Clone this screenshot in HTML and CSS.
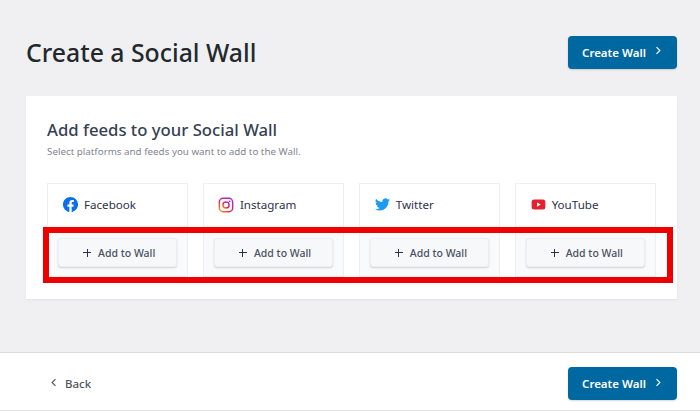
FILE: index.html
```html
<!DOCTYPE html>
<html lang="en">
<head>
    <meta charset="UTF-8">
    <meta name="viewport" content="width=device-width, initial-scale=1.0">
    <title>Create a Social Wall</title>
    <link rel="stylesheet" href="styles.css">
</head>
<body>
    <main class="content">
        <header class="page-header">
            <h1>Create a Social Wall</h1>
            <button class="btn-primary">Create Wall
                <svg class="chevron" viewBox="0 0 8 12"><path d="M2 1.5 6.5 6 2 10.5"/></svg>
            </button>
        </header>
        <section class="panel">
            <h2>Add feeds to your Social Wall</h2>
            <p class="hint">Select platforms and feeds you want to add to the Wall.</p>
            <div class="feeds">
                <div class="feed">
                    <div class="feed-name">
                        <svg class="icon" viewBox="0 0 24 24"><path fill="#0a6fe8" d="M24 12.07C24 5.4 18.63 0 12 0S0 5.4 0 12.07c0 6.03 4.39 11.02 10.13 11.93v-8.44H7.08v-3.49h3.05V9.41c0-3.02 1.79-4.69 4.53-4.69 1.31 0 2.69.24 2.69.24v2.97h-1.52c-1.49 0-1.96.93-1.96 1.89v2.25h3.33l-.53 3.49h-2.8V24C19.61 23.09 24 18.1 24 12.07z"/></svg>
                        Facebook
                    </div>
                    <div class="feed-action">
                        <button class="btn-add"><span class="plus"></span>Add to Wall</button>
                    </div>
                </div>
                <div class="feed">
                    <div class="feed-name">
                        <svg class="icon icon-ig" viewBox="0 0 24 24">
                            <defs>
                                <linearGradient id="ig" x1="0" y1="1" x2="1" y2="0">
                                    <stop offset="0" stop-color="#f9a01b"/>
                                    <stop offset=".4" stop-color="#e4264f"/>
                                    <stop offset=".75" stop-color="#c426a6"/>
                                    <stop offset="1" stop-color="#8a3ad0"/>
                                </linearGradient>
                            </defs>
                            <rect x="2" y="2" width="20" height="20" rx="5.5" fill="none" stroke="url(#ig)" stroke-width="2.2"/>
                            <circle cx="12" cy="12" r="4.6" fill="none" stroke="url(#ig)" stroke-width="2.2"/>
                            <circle cx="17.6" cy="6.4" r="1.3" fill="#b52bb0"/>
                        </svg>
                        Instagram
                    </div>
                    <div class="feed-action">
                        <button class="btn-add"><span class="plus"></span>Add to Wall</button>
                    </div>
                </div>
                <div class="feed">
                    <div class="feed-name">
                        <svg class="icon" viewBox="0 0 24 24"><path fill="#1d9bf0" d="M24 4.56a9.8 9.8 0 0 1-2.83.78 4.94 4.94 0 0 0 2.17-2.72 9.9 9.9 0 0 1-3.13 1.19 4.93 4.93 0 0 0-8.4 4.49A14 14 0 0 1 1.67 3.15a4.93 4.93 0 0 0 1.53 6.57 4.9 4.9 0 0 1-2.23-.61v.06a4.93 4.93 0 0 0 3.95 4.83 4.9 4.9 0 0 1-2.22.08 4.93 4.93 0 0 0 4.6 3.42A9.9 9.9 0 0 1 0 19.54 14 14 0 0 0 7.55 21.75c9.06 0 14-7.5 14-14l-.02-.64A10 10 0 0 0 24 4.56z"/></svg>
                        Twitter
                    </div>
                    <div class="feed-action">
                        <button class="btn-add"><span class="plus"></span>Add to Wall</button>
                    </div>
                </div>
                <div class="feed">
                    <div class="feed-name">
                        <svg class="icon" viewBox="0 0 24 24"><rect x="1" y="4" width="22" height="16" rx="4" fill="#e3222f"/><path fill="#fff" d="M9.8 8.6v6.8l5.8-3.4z"/></svg>
                        YouTube
                    </div>
                    <div class="feed-action">
                        <button class="btn-add"><span class="plus"></span>Add to Wall</button>
                    </div>
                </div>
            </div>
            <div class="highlight"></div>
        </section>
    </main>
    <footer class="page-footer">
        <a href="#" class="back-link">
            <svg class="chevron" viewBox="0 0 8 12"><path d="M6 1.5 1.5 6 6 10.5"/></svg>
            Back
        </a>
        <button class="btn-primary">Create Wall
            <svg class="chevron" viewBox="0 0 8 12"><path d="M2 1.5 6.5 6 2 10.5"/></svg>
        </button>
    </footer>
</body>
</html>
```
FILE: styles.css
```css
* {
    box-sizing: border-box;
}
html, body {
    height: 100%;
}
body {
    margin: 0;
    display: flex;
    flex-direction: column;
    height: 411px;
    overflow: hidden;
    background-color: #f0f0f2;
    font-family: "Noto Sans", "Open Sans", sans-serif;
    color: #2c324c;
}
.content {
    flex: 1;
    padding: 36px 23px 0 26px;
}
.page-header {
    display: flex;
    justify-content: space-between;
    align-items: center;
    height: 32px;
    margin-bottom: 28px;
}
h1 {
    margin: 0;
    font-size: 24.8px;
    font-weight: 500;
    color: #23282d;
}
button {
    font-family: inherit;
    cursor: pointer;
}
.btn-primary {
    display: flex;
    align-items: center;
    justify-content: center;
    gap: 9px;
    width: 109px;
    height: 33px;
    padding: 0 2px 0 0;
    border: none;
    border-radius: 4px;
    background-color: #0068a0;
    box-shadow: 0 1px 2px rgba(0, 0, 0, 0.15);
    color: #fff;
    font-size: 11.5px;
    font-weight: 600;
}
.chevron {
    width: 6px;
    height: 9px;
    margin-top: -3px;
    fill: none;
    stroke: currentColor;
    stroke-width: 1.5;
}
.panel {
    position: relative;
    height: 203px;
    padding: 23px 21px 0;
    background-color: #fff;
    box-shadow: 0 1px 2px rgba(0, 0, 0, 0.06);
}
h2 {
    margin: 0;
    font-size: 16.7px;
    line-height: 22px;
    font-weight: 500;
    color: #364152;
}
.hint {
    margin: 4px 0 0;
    font-size: 9.8px;
    line-height: 14px;
    color: #82858f;
}
.feeds {
    display: grid;
    grid-template-columns: repeat(4, 1fr);
    gap: 14.5px;
    margin-top: 24px;
}
.feed {
    height: 94px;
    border: 1px solid #eeeff1;
    display: flex;
    flex-direction: column;
}
.feed-name {
    display: flex;
    align-items: center;
    gap: 6px;
    height: 41px;
    padding: 0 0 0 15px;
    font-size: 11.6px;
    color: #2c324c;
}
.icon {
    width: 15px;
    height: 15px;
    flex: none;
}
.icon-ig {
    width: 16px;
    height: 16px;
    margin-left: -1px;
}
.feed-action {
    flex: 1;
    padding: 13px 10px 0;
    background-color: #f9fafb;
}
.btn-add {
    display: flex;
    align-items: center;
    justify-content: center;
    gap: 7px;
    width: 100%;
    height: 29px;
    padding: 0 0 0 3px;
    border: 1px solid #eceef1;
    border-radius: 3px;
    background-color: #f7f8fa;
    box-shadow: 0 1px 2px rgba(0, 0, 0, 0.16);
    color: #4a5162;
    font-size: 10.5px;
    font-weight: 500;
}
.plus {
    width: 8px;
    height: 8px;
    background:
        linear-gradient(#2c324c, #2c324c) center / 8px 1.2px no-repeat,
        linear-gradient(#2c324c, #2c324c) center / 1.2px 8px no-repeat;
}
/* red marker drawn on top of the screenshot */
.highlight {
    position: absolute;
    left: 17px;
    top: 131px;
    width: 630px;
    height: 56px;
    border: 6px solid #ee0000;
}
.page-footer {
    display: flex;
    justify-content: space-between;
    align-items: center;
    height: 59px;
    padding: 4px 23px 0 51px;
    background-color: #fff;
    border-top: 1px solid #dcdcde;
    border-bottom: 1px solid #e6e6e8;
}
.back-link {
    display: flex;
    align-items: center;
    gap: 8px;
    color: #50575e;
    font-size: 11.5px;
    font-weight: 500;
    text-decoration: none;
}
```
